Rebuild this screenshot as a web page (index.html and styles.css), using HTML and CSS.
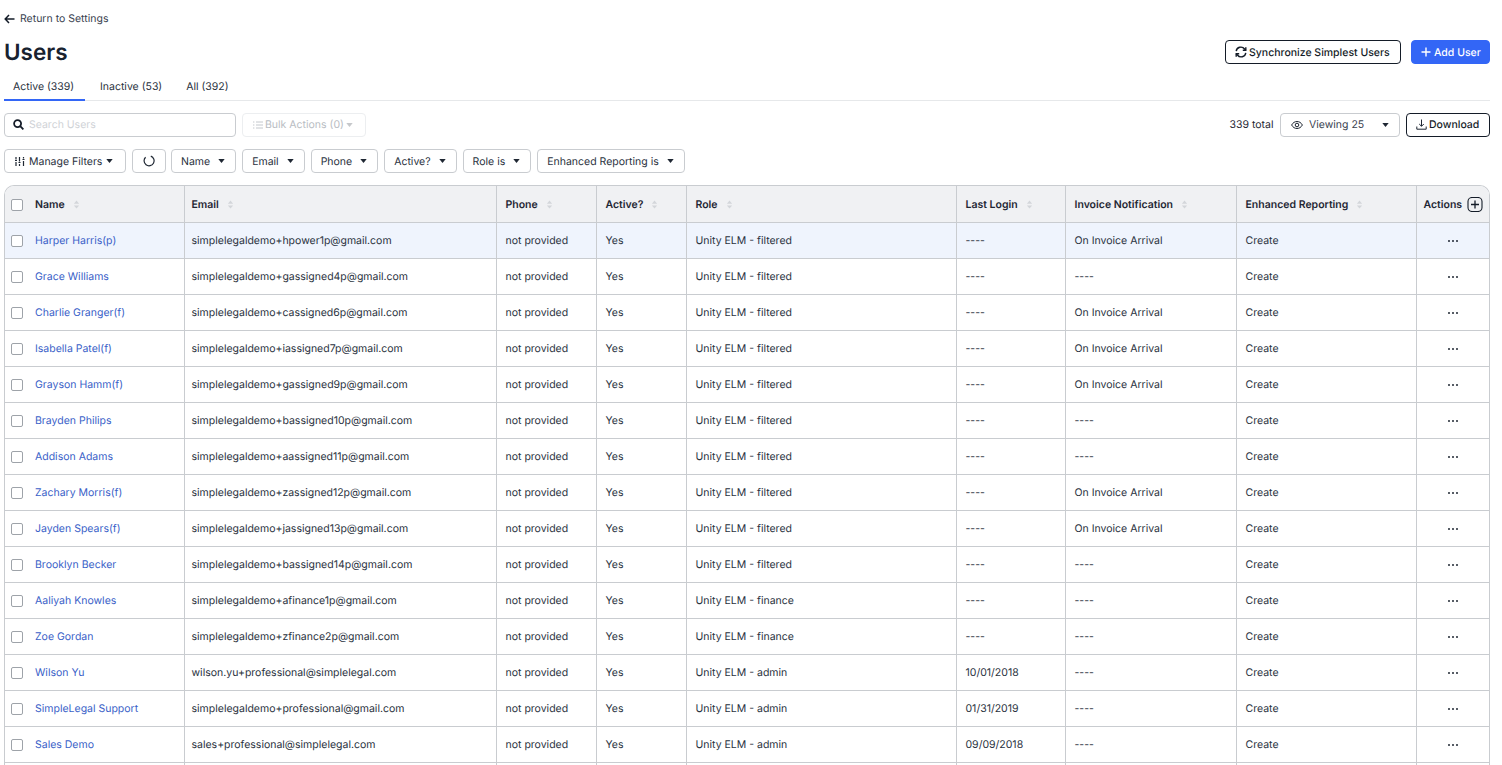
FILE: index.html
```html
<!DOCTYPE html>
<html lang="en">

<head>
    <meta charset="UTF-8">
    <meta name="viewport" content="width=device-width, initial-scale=1.0">
    <title>Users</title>
    <link rel="stylesheet" href="styles.css">
</head>

<body>
    <svg class="sprites" width="0" height="0">
        <symbol id="sort" viewBox="0 0 8 10">
            <path d="M4 0.5 7 4H1zM4 9.5 1 6h6z" fill="#d3d6da"/>
        </symbol>
        <symbol id="caret" viewBox="0 0 8 5">
            <path d="M0 0h8L4 5z" fill="#1f2733"/>
        </symbol>
        <symbol id="dots" viewBox="0 0 12 4">
            <circle cx="2" cy="2" r="1" fill="#1f2733"/>
            <circle cx="6" cy="2" r="1" fill="#1f2733"/>
            <circle cx="10" cy="2" r="1" fill="#1f2733"/>
        </symbol>
    </svg>

    <a class="back-link" href="#">
        <svg width="11" height="10" viewBox="0 0 11 10" fill="none" stroke="#141c28" stroke-width="1.5"><path d="M10.5 5H1.2M5 1 1.2 5 5 9"/></svg>
        Return to Settings
    </a>

    <div class="title-row">
        <h1>Users</h1>
        <div class="title-actions">
            <button class="btn btn-dark btn-sync">
                <svg width="12" height="12" viewBox="0 0 12 12" fill="none" stroke="#141c28" stroke-width="1.4"><path d="M1.2 5.2A4.7 4.7 0 0 1 9.6 3L10.8 4.2M10.8 6.8A4.7 4.7 0 0 1 2.4 9L1.2 7.8"/><path d="M10.8 1.2v3h-3M1.2 10.8v-3h3"/></svg>
                Synchronize Simplest Users
            </button>
            <button class="btn btn-primary">
                <svg width="10" height="10" viewBox="0 0 10 10" stroke="#fff" stroke-width="1.4"><path d="M5 .5v9M.5 5h9"/></svg>
                Add User
            </button>
        </div>
    </div>

    <div class="tabs">
        <a class="tab tab-active" href="#">Active (339)</a>
        <a class="tab" href="#">Inactive (53)</a>
        <a class="tab" href="#">All (392)</a>
    </div>

    <div class="toolbar">
        <div class="search">
            <svg width="11" height="11" viewBox="0 0 11 11" fill="none" stroke="#141c28" stroke-width="1.8"><circle cx="4.6" cy="4.6" r="3.5"/><path d="M7.2 7.2 10.4 10.4"/></svg>
            <span>Search Users</span>
        </div>
        <button class="btn btn-disabled">
            <svg width="10" height="8" viewBox="0 0 10 8" stroke="#c4c8cd" stroke-width="1"><path d="M3 1h7M3 4h7M3 7h7M0 1h1.4M0 4h1.4M0 7h1.4"/></svg>
            Bulk Actions (0)
            <svg class="caret" width="7" height="4"><use href="#caret" opacity="0.25"/></svg>
        </button>
        <div class="toolbar-right">
            <span class="total">339 total</span>
            <button class="btn btn-viewing">
                <svg width="12" height="8" viewBox="0 0 12 8" fill="none" stroke="#1f2733" stroke-width="1"><path d="M.6 4C2 1.6 3.8.5 6 .5S10 1.6 11.4 4C10 6.4 8.2 7.5 6 7.5S2 6.4 .6 4z"/><circle cx="6" cy="4" r="1.8"/></svg>
                <span class="viewing-label">Viewing 25</span>
                <svg class="caret" width="7" height="4"><use href="#caret"/></svg>
            </button>
            <button class="btn btn-dark btn-download">
                <svg width="11" height="11" viewBox="0 0 11 11" fill="none" stroke="#1f2733" stroke-width="1"><path d="M5.5 .5V7M3.2 5 5.5 7.3 7.8 5M.8 7.5v2.700h9.400V7.500"/></svg>
                Download
            </button>
        </div>
    </div>

    <div class="filters">
        <button class="btn filter filter-manage">
            <svg width="10" height="9" viewBox="0 0 10 9" stroke="#1f2733" stroke-width="1.2"><path d="M1 0v2.500M1 5v4M4.500 0v4.500M4.500 7v2M8.500 0v1.500M8.500 4v5M0 3.500h2M3.500 5.500h2M7.500 2.500h2"/></svg>
            Manage Filters
            <svg class="caret" width="7" height="4"><use href="#caret"/></svg>
        </button>
        <button class="btn filter filter-refresh">
            <svg width="12" height="12" viewBox="0 0 12 12" fill="none" stroke="#1f2733" stroke-width="1.2"><path d="M7.800 1.100A5 5 0 1 1 2.600 2.200"/></svg>
        </button>
        <button class="btn filter">Name <svg class="caret" width="7" height="4"><use href="#caret"/></svg></button>
        <button class="btn filter">Email <svg class="caret" width="7" height="4"><use href="#caret"/></svg></button>
        <button class="btn filter">Phone <svg class="caret" width="7" height="4"><use href="#caret"/></svg></button>
        <button class="btn filter">Active? <svg class="caret" width="7" height="4"><use href="#caret"/></svg></button>
        <button class="btn filter">Role is <svg class="caret" width="7" height="4"><use href="#caret"/></svg></button>
        <button class="btn filter">Enhanced Reporting is <svg class="caret" width="7" height="4"><use href="#caret"/></svg></button>
    </div>

    <div class="table-wrap">
        <table class="users-table">
            <colgroup>
                <col class="col-name">
                <col class="col-email">
                <col class="col-phone">
                <col class="col-active">
                <col class="col-role">
                <col class="col-login">
                <col class="col-invoice">
                <col class="col-reporting">
                <col class="col-actions">
            </colgroup>
            <thead>
                <tr>
                    <th><span class="check"></span>Name<svg class="sort" width="7" height="9"><use href="#sort"/></svg></th>
                    <th>Email<svg class="sort" width="7" height="9"><use href="#sort"/></svg></th>
                    <th>Phone<svg class="sort" width="7" height="9"><use href="#sort"/></svg></th>
                    <th>Active?<svg class="sort" width="7" height="9"><use href="#sort"/></svg></th>
                    <th>Role<svg class="sort" width="7" height="9"><use href="#sort"/></svg></th>
                    <th>Last Login<svg class="sort" width="7" height="9"><use href="#sort"/></svg></th>
                    <th>Invoice Notification<svg class="sort" width="7" height="9"><use href="#sort"/></svg></th>
                    <th>Enhanced Reporting<svg class="sort" width="7" height="9"><use href="#sort"/></svg></th>
                    <th class="th-actions">Actions
                        <svg width="16" height="15" viewBox="0 0 16 15" fill="none" stroke="#141c28"><rect x="1" y=".5" width="14" height="14" rx="4" stroke-width="1.1"/><path d="M8 3.500v8M4 7.500h8" stroke-width="1.3"/></svg>
                    </th>
                </tr>
            </thead>
            <tbody>
                <tr class="row-hover">
                    <td><span class="check"></span><a href="#">Harper Harris(p)</a></td>
                    <td>simplelegaldemo+hpower1p@gmail.com</td>
                    <td>not provided</td><td>Yes</td><td>Unity ELM - filtered</td><td>----</td><td>On Invoice Arrival</td><td>Create</td>
                    <td class="td-actions"><svg width="12" height="4"><use href="#dots"/></svg></td>
                </tr>
                <tr>
                    <td><span class="check"></span><a href="#">Grace Williams</a></td>
                    <td>simplelegaldemo+gassigned4p@gmail.com</td>
                    <td>not provided</td><td>Yes</td><td>Unity ELM - filtered</td><td>----</td><td>----</td><td>Create</td>
                    <td class="td-actions"><svg width="12" height="4"><use href="#dots"/></svg></td>
                </tr>
                <tr>
                    <td><span class="check"></span><a href="#">Charlie Granger(f)</a></td>
                    <td>simplelegaldemo+cassigned6p@gmail.com</td>
                    <td>not provided</td><td>Yes</td><td>Unity ELM - filtered</td><td>----</td><td>On Invoice Arrival</td><td>Create</td>
                    <td class="td-actions"><svg width="12" height="4"><use href="#dots"/></svg></td>
                </tr>
                <tr>
                    <td><span class="check"></span><a href="#">Isabella Patel(f)</a></td>
                    <td>simplelegaldemo+iassigned7p@gmail.com</td>
                    <td>not provided</td><td>Yes</td><td>Unity ELM - filtered</td><td>----</td><td>On Invoice Arrival</td><td>Create</td>
                    <td class="td-actions"><svg width="12" height="4"><use href="#dots"/></svg></td>
                </tr>
                <tr>
                    <td><span class="check"></span><a href="#">Grayson Hamm(f)</a></td>
                    <td>simplelegaldemo+gassigned9p@gmail.com</td>
                    <td>not provided</td><td>Yes</td><td>Unity ELM - filtered</td><td>----</td><td>On Invoice Arrival</td><td>Create</td>
                    <td class="td-actions"><svg width="12" height="4"><use href="#dots"/></svg></td>
                </tr>
                <tr>
                    <td><span class="check"></span><a href="#">Brayden Philips</a></td>
                    <td>simplelegaldemo+bassigned10p@gmail.com</td>
                    <td>not provided</td><td>Yes</td><td>Unity ELM - filtered</td><td>----</td><td>----</td><td>Create</td>
                    <td class="td-actions"><svg width="12" height="4"><use href="#dots"/></svg></td>
                </tr>
                <tr>
                    <td><span class="check"></span><a href="#">Addison Adams</a></td>
                    <td>simplelegaldemo+aassigned11p@gmail.com</td>
                    <td>not provided</td><td>Yes</td><td>Unity ELM - filtered</td><td>----</td><td>----</td><td>Create</td>
                    <td class="td-actions"><svg width="12" height="4"><use href="#dots"/></svg></td>
                </tr>
                <tr>
                    <td><span class="check"></span><a href="#">Zachary Morris(f)</a></td>
                    <td>simplelegaldemo+zassigned12p@gmail.com</td>
                    <td>not provided</td><td>Yes</td><td>Unity ELM - filtered</td><td>----</td><td>On Invoice Arrival</td><td>Create</td>
                    <td class="td-actions"><svg width="12" height="4"><use href="#dots"/></svg></td>
                </tr>
                <tr>
                    <td><span class="check"></span><a href="#">Jayden Spears(f)</a></td>
                    <td>simplelegaldemo+jassigned13p@gmail.com</td>
                    <td>not provided</td><td>Yes</td><td>Unity ELM - filtered</td><td>----</td><td>On Invoice Arrival</td><td>Create</td>
                    <td class="td-actions"><svg width="12" height="4"><use href="#dots"/></svg></td>
                </tr>
                <tr>
                    <td><span class="check"></span><a href="#">Brooklyn Becker</a></td>
                    <td>simplelegaldemo+bassigned14p@gmail.com</td>
                    <td>not provided</td><td>Yes</td><td>Unity ELM - filtered</td><td>----</td><td>----</td><td>Create</td>
                    <td class="td-actions"><svg width="12" height="4"><use href="#dots"/></svg></td>
                </tr>
                <tr>
                    <td><span class="check"></span><a href="#">Aaliyah Knowles</a></td>
                    <td>simplelegaldemo+afinance1p@gmail.com</td>
                    <td>not provided</td><td>Yes</td><td>Unity ELM - finance</td><td>----</td><td>----</td><td>Create</td>
                    <td class="td-actions"><svg width="12" height="4"><use href="#dots"/></svg></td>
                </tr>
                <tr>
                    <td><span class="check"></span><a href="#">Zoe Gordan</a></td>
                    <td>simplelegaldemo+zfinance2p@gmail.com</td>
                    <td>not provided</td><td>Yes</td><td>Unity ELM - finance</td><td>----</td><td>----</td><td>Create</td>
                    <td class="td-actions"><svg width="12" height="4"><use href="#dots"/></svg></td>
                </tr>
                <tr>
                    <td><span class="check"></span><a href="#">Wilson Yu</a></td>
                    <td>wilson.yu+professional@simplelegal.com</td>
                    <td>not provided</td><td>Yes</td><td>Unity ELM - admin</td><td>10/01/2018</td><td>----</td><td>Create</td>
                    <td class="td-actions"><svg width="12" height="4"><use href="#dots"/></svg></td>
                </tr>
                <tr>
                    <td><span class="check"></span><a href="#">SimpleLegal Support</a></td>
                    <td>simplelegaldemo+professional@gmail.com</td>
                    <td>not provided</td><td>Yes</td><td>Unity ELM - admin</td><td>01/31/2019</td><td>----</td><td>Create</td>
                    <td class="td-actions"><svg width="12" height="4"><use href="#dots"/></svg></td>
                </tr>
                <tr>
                    <td><span class="check"></span><a href="#">Sales Demo</a></td>
                    <td>sales+professional@simplelegal.com</td>
                    <td>not provided</td><td>Yes</td><td>Unity ELM - admin</td><td>09/09/2018</td><td>----</td><td>Create</td>
                    <td class="td-actions"><svg width="12" height="4"><use href="#dots"/></svg></td>
                </tr>
                <tr>
                    <td></td><td></td><td></td><td></td><td></td><td></td><td></td><td></td><td></td>
                </tr>
            </tbody>
        </table>
    </div>
</body>

</html>
```

FILE: styles.css
```css
* {
    padding: 0;
    margin: 0;
    box-sizing: border-box;
    font-family: 'Inter', sans-serif;
    text-rendering: geometricPrecision;
}

html,
body {
    height: 100%;
    overflow: hidden;
}

body {
    display: flex;
    flex-direction: column;
    padding: 12px 12px 0 4px;
    font-size: 10.5px;
    color: #1f2733;
    background-color: #ffffff;
}

body > * {
    flex: none;
}

a {
    text-decoration: none;
    color: inherit;
}

svg {
    flex-shrink: 0;
}

.sprites {
    display: block;
    height: 0;
}

.back-link {
    display: flex;
    align-items: center;
    gap: 5px;
    height: 13px;
    color: #3a4350;
}

.back-link svg {
    margin-top: 1px;
}

.title-row {
    display: flex;
    justify-content: space-between;
    align-items: center;
    height: 32px;
    margin-top: 11px;
}

h1 {
    font-size: 22.5px;
    font-weight: 600;
    color: #18222f;
}

.title-actions {
    display: flex;
    gap: 10px;
}

.btn {
    display: inline-flex;
    align-items: center;
    height: 24px;
    padding: 0 9px;
    gap: 4px;
    border: 1px solid #c9ccd0;
    border-radius: 4px;
    background-color: #ffffff;
    color: #1f2733;
    font-size: 10.5px;
    white-space: nowrap;
}

.btn-dark {
    border-color: #141c28;
    font-weight: 500;
    color: #141c28;
}

.btn-sync {
    width: 176px;
    gap: 2px;
}

.btn-primary {
    width: 79px;
    gap: 3px;
    border-color: #3366f6;
    background-color: #3366f6;
    color: #ffffff;
    font-weight: 500;
}

.btn-disabled {
    border-color: #eceef0;
    color: #b9bdc3;
    width: 124px;
    padding: 0 8px 0 10px;
    gap: 2px;
}

.tabs {
    display: flex;
    height: 29px;
    margin-top: 4px;
    border-bottom: 1px solid #e6e8ea;
}

.tab {
    height: 29px;
    padding: 8px 9px 0;
    margin-right: 6px;
    color: #2a323e;
    white-space: nowrap;
    border-bottom: 2px solid transparent;
}

.tab-active {
    border-bottom-color: #3366f6;
    width: 81px;
}

.toolbar {
    display: flex;
    align-items: center;
    gap: 6px;
    margin-top: 12px;
}

.search {
    display: flex;
    align-items: center;
    gap: 5px;
    width: 232px;
    height: 24px;
    padding: 0 8px 1px;
    border: 1px solid #c9ccd0;
    border-radius: 4px;
}

.search span {
    color: #d0d3d7;
}

.toolbar .btn {
    padding-bottom: 1px;
}

.toolbar-right {
    display: flex;
    align-items: center;
    gap: 6px;
    margin-left: auto;
}

.total {
    margin-bottom: 1px;
    margin-right: 0.5px;
    color: #1f2733;
}

.toolbar .btn-viewing {
    width: 120px;
    padding: 0 10px 1px;
    gap: 6px;
    color: #3a4350;
}

.viewing-label {
    flex: 1;
    text-align: left;
}

.toolbar .btn-download {
    width: 84px;
    padding: 0 9px 1px;
    gap: 2px;
}

.filters {
    display: flex;
    gap: 6px;
    margin-top: 12px;
}

.filter {
    gap: 8px;
    padding: 0 10px 0 9px;
    color: #2a323e;
}

.filter-manage {
    width: 122px;
    gap: 4px;
    padding: 0 10px;
}

.filter-refresh {
    width: 34px;
    justify-content: center;
    margin-right: -1px;
}

body > .table-wrap {
    flex: 1;
    min-height: 0;
    margin-top: 12px;
    border: 1px solid #c9ccd0;
    border-bottom: none;
    border-radius: 10px 10px 0 0;
    overflow: hidden;
}

.users-table {
    width: 100%;
    border-collapse: collapse;
    table-layout: fixed;
}

.col-name { width: 179px; }
.col-email { width: 312px; }
.col-phone { width: 100px; }
.col-active { width: 90px; }
.col-role { width: 270px; }
.col-login { width: 109px; }
.col-invoice { width: 171px; }
.col-reporting { width: 180px; }
.col-actions { width: 73px; }

.users-table th,
.users-table td {
    height: 36px;
    padding: 0 8px 0 9px;
    text-align: left;
    font-size: 10.5px;
    white-space: nowrap;
    border-right: 1px solid #c9ccd0;
    border-bottom: 1px solid #c9ccd0;
}

.users-table th:last-child,
.users-table td:last-child {
    border-right: none;
}

.users-table th {
    padding-top: 2px;
    background-color: #f0f1f3;
    font-weight: 600;
    color: #1f2733;
}

.users-table td {
    color: #2a323e;
}

.users-table td a {
    color: #3a5fc8;
}

.users-table th:first-child,
.users-table td:first-child {
    padding-left: 6px;
}

.users-table th:nth-child(2),
.users-table td:nth-child(2) {
    padding-left: 7px;
}

.row-hover td {
    background-color: #eff4fd;
}

.check {
    display: inline-block;
    vertical-align: -3px;
    width: 12px;
    height: 12px;
    margin-right: 12px;
    border: 1px solid #9ea3a9;
    border-radius: 2px;
    background-color: #ffffff;
}

.sort {
    margin-left: 8px;
    vertical-align: -1px;
}

.users-table .th-actions {
    padding: 2px 4px 0 7px;
}

.th-actions svg {
    vertical-align: -4px;
    margin-left: 2px;
}

.users-table .td-actions {
    text-align: center;
}

.td-actions svg {
    vertical-align: 1px;
}
```
